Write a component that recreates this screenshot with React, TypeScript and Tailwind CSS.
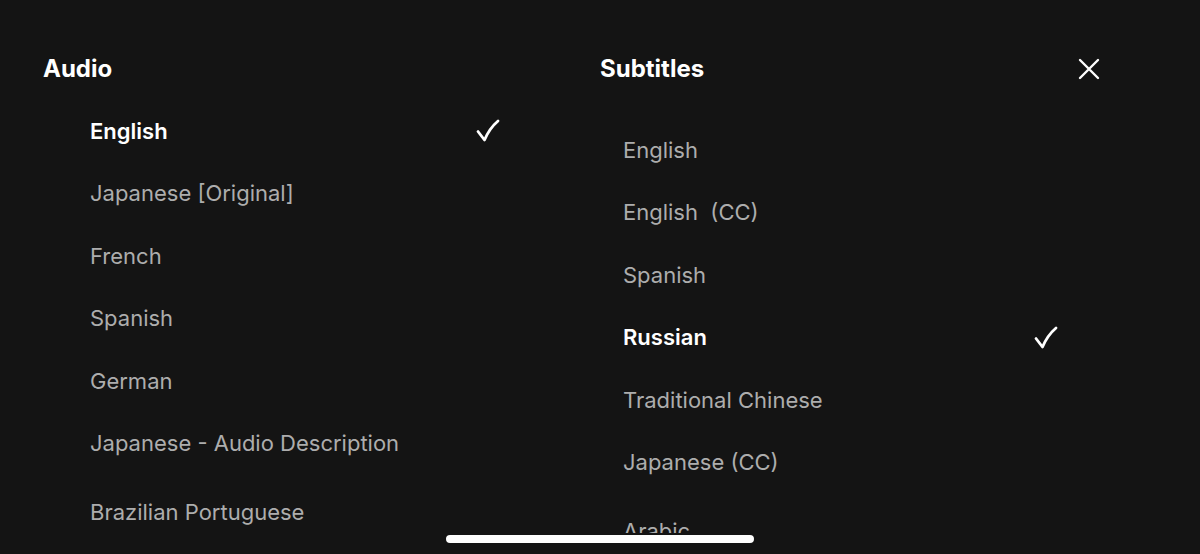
import React from "react";

const audio = [
  "English",
  "Japanese [Original]",
  "French",
  "Spanish",
  "German",
  "Japanese - Audio Description",
  "Brazilian Portuguese",
];

const subtitles = [
  "English",
  "English  (CC)",
  "Spanish",
  "Russian",
  "Traditional Chinese",
  "Japanese (CC)",
  "Arabic",
];

const Check = () => (
  <svg width="24" height="24" viewBox="0 0 24 24" fill="none">
    <path
      d="M2 12.5 L8.5 21 C11 15 15 8 22 2"
      stroke="white"
      strokeWidth="2.8"
      strokeLinecap="round"
      strokeLinejoin="round"
    />
  </svg>
);

const Close = () => (
  <svg width="22" height="22" viewBox="0 0 22 22" fill="none">
    <path d="M2 2 L20 20 M20 2 L2 20" stroke="white" strokeWidth="2.4" strokeLinecap="round" />
  </svg>
);

const Row = ({ label, selected, last }: { label: string; selected: boolean; last?: boolean }) => (
  <div className={`flex h-[62.5px] items-center justify-between ${last ? "mt-[6px]" : ""}`}>
    <span
      className={
        selected
          ? "text-[22px] font-semibold text-white"
          : "text-[22px] font-normal text-[#adadad]"
      }
      style={{ whiteSpace: "pre" }}
    >
      {label}
    </span>
    {selected && <Check />}
  </div>
);

export default function App() {
  return (
    <div
      className="relative h-[554px] w-[1200px] overflow-hidden bg-[#141414]"
      style={{ fontFamily: "Inter, 'Noto Sans', sans-serif" }}
    >
      <div className="flex pl-[43px] pr-[100px] pt-[53px]">
        {/* Audio column */}
        <div className="w-[557px] pr-[100px]">
          <h2 className="h-[32px] text-[24px] font-bold leading-[32px] text-white">Audio</h2>
          <div className="mt-[15px] pl-[47px]">
            {audio.map((a, i) => (
              <Row key={a} label={a} selected={i === 0} last={i === audio.length - 1} />
            ))}
          </div>
        </div>

        {/* Subtitles column */}
        <div className="flex-1">
          <div className="flex h-[32px] items-center justify-between">
            <h2 className="text-[24px] font-bold leading-[32px] text-white">Subtitles</h2>
            <Close />
          </div>
          <div className="mt-[34px] pl-[23px] pr-[42px]">
            {subtitles.map((s, i) => (
              <Row key={s} label={s} selected={i === 3} last={i === subtitles.length - 1} />
            ))}
          </div>
        </div>
      </div>

      {/* home indicator */}
      <div className="absolute left-[444px] top-[533px] h-[12px] w-[312px] rounded-full border-2 border-[#141414] bg-white" />
    </div>
  );
}
